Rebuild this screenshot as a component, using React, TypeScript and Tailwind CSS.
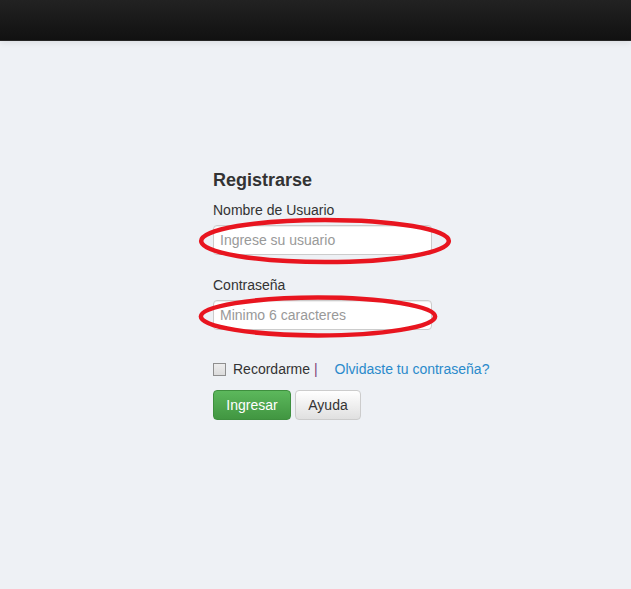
function Ellipse({ className }: { className: string }) {
  return (
    <svg className={`pointer-events-none absolute ${className}`} viewBox="0 0 100 100" preserveAspectRatio="none">
      <ellipse cx="50" cy="50" rx="48" ry="44" fill="none" stroke="#e8151f" strokeWidth="4.5" vectorEffect="non-scaling-stroke" />
    </svg>
  );
}

export default function App() {
  return (
    <div className="min-h-[589px] bg-[#eef1f5] font-['Liberation_Sans',Arial,sans-serif] text-[#333]">
      <div className="h-[41px] border-b border-[#252525] bg-gradient-to-b from-[#222] to-[#111] shadow-[0_2px_6px_rgba(0,0,0,0.08)]" />

      <div className="pl-[213px] pt-[129px]">
        <div className="w-[219px]">
          <h2 className="text-[18px] font-bold leading-[20px]">Registrarse</h2>

          <label className="mt-[10px] mb-[5px] block text-[14px] leading-[20px]">Nombre de Usuario</label>
          <div className="relative">
            <input
              className="block h-[30px] w-[219px] rounded-[4px] border border-[#ccc] bg-white px-[6px] text-[14px] text-[#555] shadow-[inset_0_1px_1px_rgba(0,0,0,0.075)] outline-none placeholder:text-[#999]"
              placeholder="Ingrese su usuario"
            />
            <Ellipse className="left-[-17px] top-[-8px] h-[48px] w-[258px]" />
          </div>

          <label className="mt-[20px] mb-[5px] block text-[14px] leading-[20px]">Contraseña</label>
          <div className="relative">
            <input
              type="password"
              className="block h-[30px] w-[219px] rounded-[4px] border border-[#ccc] bg-white px-[6px] text-[14px] text-[#555] shadow-[inset_0_1px_1px_rgba(0,0,0,0.075)] outline-none placeholder:text-[#999]"
              placeholder="Minimo 6 caracteres"
            />
            <Ellipse className="left-[-17px] top-[-5px] h-[43px] w-[244px]" />
          </div>
        </div>

        <div className="mt-[29px] flex h-[20px] items-center text-[14px] leading-[20px] whitespace-nowrap">
          <span className="mr-[7px] inline-block h-[13px] w-[13px] border border-[#8f8f8f] bg-gradient-to-b from-[#ededed] to-[#dcdcdc]" />
          <span>Recordarme <span className="text-[#7a3e7a]">|</span></span>
          <a className="ml-[17px] text-[#2a8acb]">Olvidaste tu contraseña?</a>
        </div>

        <div className="mt-[11px] flex gap-[4px]">
          <button className="h-[30px] w-[78px] rounded-[4px] border border-[#3e8f3e] bg-gradient-to-b from-[#5cb85c] to-[#419641] text-[14px] text-white">
            Ingresar
          </button>
          <button className="h-[30px] w-[66px] rounded-[4px] border border-[#ccc] bg-gradient-to-b from-white to-[#e0e0e0] text-[14px] text-[#333]">
            Ayuda
          </button>
        </div>
      </div>
    </div>
  );
}
